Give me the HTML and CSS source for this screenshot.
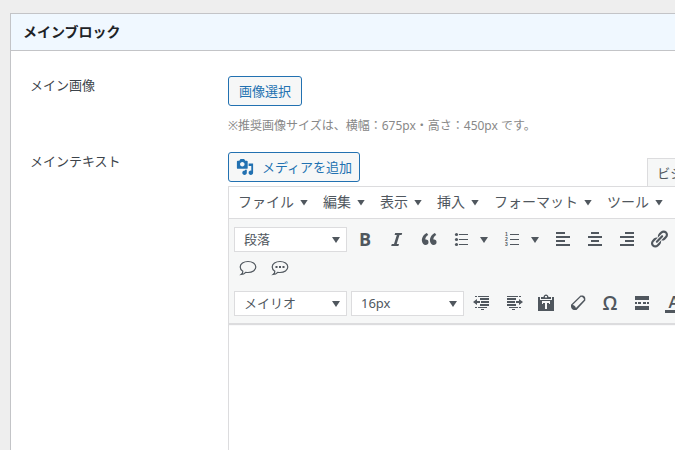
FILE: index.html
```html
<!DOCTYPE html>
<html lang="ja">
<head>
<meta charset="UTF-8">
<meta name="viewport" content="width=device-width, initial-scale=1.0">
<title>メインブロック</title>
<link rel="stylesheet" href="styles.css">
</head>
<body>

<div class="postbox">
    <h2 class="postbox-title">メインブロック</h2>

    <div class="fields">
        <div class="label">メイン画像</div>
        <div class="field">
            <button type="button" class="button">画像選択</button>
            <p class="description">※推奨画像サイズは、横幅：675px・高さ：450px です。</p>
        </div>

        <label class="label" for="mainText">メインテキスト</label>
        <div class="field">
            <div class="editor-tools">
                <button type="button" class="button">
                    <svg class="media-icon" viewBox="0 0 20 20"><path d="M13 11V4c0-.55-.45-1-1-1h-1.67L9 1H5L3.67 3H2c-.55 0-1 .45-1 1v7c0 .55.45 1 1 1h10c.55 0 1-.45 1-1zM7 4.5c1.38 0 2.5 1.12 2.5 2.5S8.38 9.5 7 9.5 4.5 8.38 4.5 7 5.62 4.5 7 4.5zM14 6h5v10.5c0 1.38-1.12 2.5-2.5 2.5S14 17.88 14 16.5s1.12-2.5 2.5-2.5c.17 0 .34.02.5.05V9h-3V6zm-4 8.05V13h2v3.5c0 1.38-1.12 2.5-2.5 2.5S7 17.88 7 16.5 8.12 14 9.5 14c.17 0 .34.02.5.05z"/></svg>
                    メディアを追加
                </button>
                <button type="button" class="tab">ビジュアル</button>
            </div>

            <div class="editor">
                <div class="menubar">
                    <button type="button" class="menu">ファイル<span class="caret"></span></button>
                    <button type="button" class="menu">編集<span class="caret"></span></button>
                    <button type="button" class="menu">表示<span class="caret"></span></button>
                    <button type="button" class="menu">挿入<span class="caret"></span></button>
                    <button type="button" class="menu">フォーマット<span class="caret"></span></button>
                    <button type="button" class="menu">ツール<span class="caret"></span></button>
                </div>

                <div class="toolbar">
                    <div class="tool-row">
                        <div class="listbox">
                            <select aria-label="段落書式"><option>段落</option></select>
                            <span class="caret"></span>
                        </div>
                        <button type="button" class="tool" aria-label="太字"><svg viewBox="0 0 20 20"><text class="bold" x="10" y="17" text-anchor="middle">B</text></svg></button>
                        <button type="button" class="tool" aria-label="イタリック"><svg viewBox="0 0 20 20"><path d="M15.200 4h-7l-.6 2h2.200l-2.800 9H4.800l-.6 2h7.200l.6-2H9.700l2.800-9h2.100z"/></svg></button>
                        <button type="button" class="tool" aria-label="引用"><svg viewBox="0 0 20 20"><path d="M9.49 13.22c0-.74-.2-1.38-.61-1.9-.62-.78-1.83-.88-2.53-.72-.29-1.65 1.11-3.75 2.92-4.65L7.88 4c-2.73 1.3-5.42 4.28-4.96 8.05C3.21 14.43 4.59 16 6.54 16c.85 0 1.56-.25 2.12-.75s.83-1.18.83-2.03zm8.05 0c0-.74-.2-1.38-.61-1.9-.63-.78-1.83-.88-2.53-.72-.29-1.65 1.11-3.75 2.92-4.65L15.93 4c-2.73 1.3-5.41 4.28-4.95 8.05.29 2.38 1.66 3.95 3.61 3.95.85 0 1.56-.25 2.12-.75s.83-1.18.83-2.03z"/></svg></button>
                        <button type="button" class="tool split" aria-label="番号なしリスト"><svg viewBox="0 0 20 20"><circle cx="5.5" cy="5.5" r="1.6"/><circle cx="5.5" cy="10.5" r="1.6"/><circle cx="5.5" cy="15.5" r="1.6"/><path d="M8 5h9v1H8zM8 10h9v1H8zM8 15h9v1H8z"/></svg><span class="caret"></span></button>
                        <button type="button" class="tool split" aria-label="番号付きリスト"><svg viewBox="0 0 20 20"><text class="num" x="3" y="7">1</text><text class="num" x="3" y="12">2</text><text class="num" x="3" y="17">3</text><path d="M8 5h9v1H8zM8 10h9v1H8zM8 15h9v1H8z"/></svg><span class="caret"></span></button>
                        <button type="button" class="tool" aria-label="左寄せ"><svg viewBox="0 0 20 20"><path d="M12 5V3H3v2h9zm5 4V7H3v2h14zm-5 4v-2H3v2h9zm5 4v-2H3v2h14z"/></svg></button>
                        <button type="button" class="tool" aria-label="中央揃え"><svg viewBox="0 0 20 20"><path d="M14 5V3H6v2h8zm3 4V7H3v2h14zm-3 4v-2H6v2h8zm3 4v-2H3v2h14z"/></svg></button>
                        <button type="button" class="tool" aria-label="右寄せ"><svg viewBox="0 0 20 20"><path d="M17 5V3H8v2h9zm0 4V7H3v2h14zm0 4v-2H8v2h9zm0 4v-2H3v2h14z"/></svg></button>
                        <button type="button" class="tool" aria-label="リンク"><svg viewBox="0 0 20 20"><path d="M17.74 2.76c1.68 1.69 1.68 4.41 0 6.1l-1.53 1.52c-1.12 1.12-2.7 1.47-4.14 1.09l2.62-2.61.76-.77.76-.76c.84-.84.84-2.2 0-3.04-.84-.85-2.2-.85-3.04 0l-.77.76-3.38 3.38c-.37-1.44-.02-3.02 1.1-4.14l1.52-1.53c1.69-1.68 4.42-1.68 6.1 0zM8.59 13.43l5.34-5.34c.42-.42.42-1.1 0-1.52-.44-.43-1.13-.39-1.53 0l-5.33 5.34c-.42.42-.42 1.1 0 1.52.44.43 1.13.39 1.52 0zm-.76 2.29l4.14-4.15c.38 1.44.03 3.02-1.09 4.14l-1.52 1.53c-1.69 1.68-4.41 1.68-6.1 0-1.68-1.68-1.68-4.42 0-6.1l1.53-1.52c1.12-1.12 2.7-1.47 4.14-1.1l-4.14 4.15c-.85.84-.85 2.2 0 3.05.84.84 2.2.84 3.04 0z"/></svg></button>
                    </div>
                    <div class="tool-row">
                        <button type="button" class="tool" aria-label="吹き出し"><svg viewBox="0 0 20 20"><path class="line" d="M4.800 13.200C3.200 12.200 2.200 10.700 2.200 9C2.200 5.900 5.700 3.500 10 3.500s7.800 2.400 7.800 5.500-3.500 5.500-7.800 5.500c-.8 0-1.600-.1-2.300-.2C6.500 15.600 5 16.400 3.200 16.500C4.400 15.600 4.900 14.600 4.800 13.200z"/></svg></button>
                        <button type="button" class="tool" aria-label="吹き出し（文字）"><svg viewBox="0 0 20 20"><path class="line" d="M4.800 13.200C3.200 12.200 2.200 10.700 2.200 9C2.200 5.900 5.700 3.500 10 3.500s7.800 2.400 7.800 5.500-3.500 5.500-7.800 5.500c-.8 0-1.600-.1-2.300-.2C6.500 15.600 5 16.400 3.200 16.500C4.400 15.600 4.900 14.600 4.800 13.200z"/><path d="M5.500 8h2v2h-2zM9 8h2v2H9zM12.500 8h2v2h-2z"/></svg></button>
                    </div>
                    <div class="tool-row last">
                        <div class="listbox">
                            <select aria-label="フォント"><option>メイリオ</option></select>
                            <span class="caret"></span>
                        </div>
                        <div class="listbox">
                            <select aria-label="フォントサイズ"><option>16px</option></select>
                            <span class="caret"></span>
                        </div>
                        <button type="button" class="tool" aria-label="インデントを減らす"><svg viewBox="0 0 20 20"><path d="M3 3h2v1H3zM6 3h11v1H6zM8 5h9v2H8zM9 8h8v2H9zM8 11h9v2H8zM3 14h2v1H3zM6 14h9v1H6zM9 16h3v1H9zM1 9l4-3v2h3v2H5v2z"/></svg></button>
                        <button type="button" class="tool" aria-label="インデントを増やす"><svg viewBox="0 0 20 20"><path d="M3 3h11v1H3zM15 3h2v1h-2zM3 5h9v2H3zM3 8h8v2H3zM3 11h9v2H3zM5 14h9v1H5zM15 14h2v1h-2zM8 16h3v1H8zM19 9l-4-3v2h-3v2h3v2z"/></svg></button>
                        <button type="button" class="tool" aria-label="テキストとしてペースト"><svg viewBox="0 0 20 20"><path fill-rule="evenodd" d="M2 4h2v4h12V4h2v14H2zM5 6V4h2.500c.2-1.500 1.200-2.500 2.500-2.500s2.300 1 2.500 2.500H15v2zM9 4.500h2V3H9z"/><path d="M2 7h16v3H2z"/><path class="paper" d="M6 8h8v3h-1v-1h-2v6H9v-6H7v1H6z"/></svg></button>
                        <button type="button" class="tool" aria-label="書式設定をクリア"><svg viewBox="0 0 20 20"><path fill-rule="evenodd" d="M12.500 2.500h2.500c1.300.5 2.100 1.400 2.300 2.700v2.300L8.500 17H5.700C4.200 16.400 3.200 15.300 3 13.700v-2zM13 3.700L4.600 12c1.700.3 2.900 1.300 3.300 3L16 6.700c-.2-1.700-1.300-2.800-3-3z"/></svg></button>
                        <button type="button" class="tool" aria-label="特殊文字"><svg viewBox="0 0 20 20"><text class="omega" x="10" y="17" text-anchor="middle">Ω</text></svg></button>
                        <button type="button" class="tool" aria-label="続きを読む"><svg viewBox="0 0 20 20"><path d="M3 3h14v4H3zM3 9h2v2H3zM6 9h3v2H6zM11 9h3v2h-3zM15 9h2v2h-2zM3 13h14v4H3z"/></svg></button>
                        <button type="button" class="tool" aria-label="テキスト色"><svg viewBox="0 0 20 20"><text class="color" x="10" y="15" text-anchor="middle">A</text><path d="M1 17h18v3H1z"/></svg></button>
                    </div>
                </div>

                <textarea id="mainText" class="content"></textarea>
            </div>
        </div>
    </div>
</div>

</body>
</html>
```
FILE: styles.css
```css
* {
    box-sizing: border-box;
}

body {
    margin: 0;
    padding: 13px 0 0 10px;
    background: #eee;
    color: #3c434a;
    font-family: "Noto Sans", "Noto Sans CJK JP", sans-serif;
    font-size: 13px;
    line-height: 20px;
    overflow: hidden;
}

button, select, textarea {
    margin: 0;
    font: inherit;
    color: inherit;
}

/* box */
.postbox {
    min-width: 722px;
    border: 1px solid #c3c4c7;
    border-bottom: 0;
    background: #fff;
}

.postbox-title {
    margin: 0;
    padding: 8px 12px;
    border-bottom: 1px solid #c3c4c7;
    background: #f0f8ff;
    color: #1d2327;
    font-size: 14px;
    font-weight: 600;
}

.fields {
    display: grid;
    grid-template-columns: 198px 1fr;
    row-gap: 16px;
    padding: 25px 0 0 19px;
}

.label {
    line-height: 18px;
}

.button {
    display: inline-flex;
    align-items: center;
    gap: 8px;
    height: 30px;
    padding: 0 10px;
    border: 1px solid #2271b1;
    border-radius: 3px;
    background: #f6f7f7;
    color: #2271b1;
    white-space: nowrap;
}

.description {
    margin: 10px 0 0;
    color: #888;
    font-size: 12px;
}

/* editor */
.editor-tools {
    display: flex;
    justify-content: space-between;
    height: 34px;
}

.editor-tools .button {
    padding: 0 7px;
}

.media-icon {
    width: 18px;
    height: 18px;
    fill: currentColor;
}

.tab {
    height: 28px;
    margin-top: 6px;
    padding: 0 9px;
    border: 1px solid #dcdcde;
    border-bottom: 0;
    background: #f6f7f7;
    color: #50575e;
    white-space: nowrap;
}

.editor {
    border: 1px solid #dcdcde;
    border-bottom: 0;
}

.menubar {
    display: flex;
    gap: 1px;
    height: 32px;
    padding: 0 2px;
    border-bottom: 1px solid #dcdcde;
}

.menu {
    display: flex;
    align-items: center;
    gap: 6px;
    padding: 0 7px 2px;
    border: 0;
    background: none;
    color: #50575e;
    font-size: 14px;
    white-space: nowrap;
}

.caret {
    width: 8px;
    height: 6px;
    margin-top: 2px;
    background: #50575e;
    clip-path: polygon(0 0, 100% 0, 50% 100%);
}

.toolbar {
    padding: 6px 5px;
    border-bottom: 1px solid #dcdcde;
    background: #f6f7f7;
    box-shadow: 0 1px 1px #dcdcde;
}

.tool-row {
    display: flex;
    align-items: center;
    gap: 4px;
    height: 28px;
    margin-bottom: 1px;
}

.tool-row.last {
    margin: 7px 0 0;
}

.listbox {
    display: grid;
    flex: none;
    align-items: center;
    width: 113px;
}

.listbox select {
    grid-area: 1 / 1;
    height: 25px;
    padding: 0 9px;
    border: 1px solid #dcdcde;
    border-radius: 0;
    background: #fff;
    color: #50575e;
    appearance: none;
}

.listbox .caret {
    grid-area: 1 / 1;
    justify-self: end;
    margin-right: 7px;
    pointer-events: none;
}

.tool {
    display: flex;
    flex: none;
    align-items: center;
    justify-content: center;
    width: 28px;
    height: 28px;
    padding: 0;
    border: 0;
    background: none;
    color: #50575e;
}

.tool.split {
    justify-content: flex-start;
    gap: 9px;
    width: 47px;
    padding-left: 4px;
}

.tool svg {
    width: 20px;
    height: 20px;
    fill: currentColor;
    overflow: visible;
}

.tool .line {
    fill: none;
    stroke: currentColor;
    stroke-width: 1.2;
}

.tool .paper {
    fill: #f6f7f7;
}

.bold {
    font: bold 18px "Open Sans", sans-serif;
}

.num {
    font: bold 5px "Liberation Sans", sans-serif;
}

.omega {
    font: 600 19px "Open Sans", sans-serif;
}

.color {
    font: 600 17px "Open Sans", sans-serif;
}

.content {
    display: block;
    width: 100%;
    height: calc(100vh - 324px);
    border: 0;
    background: transparent;
    resize: none;
}
```
